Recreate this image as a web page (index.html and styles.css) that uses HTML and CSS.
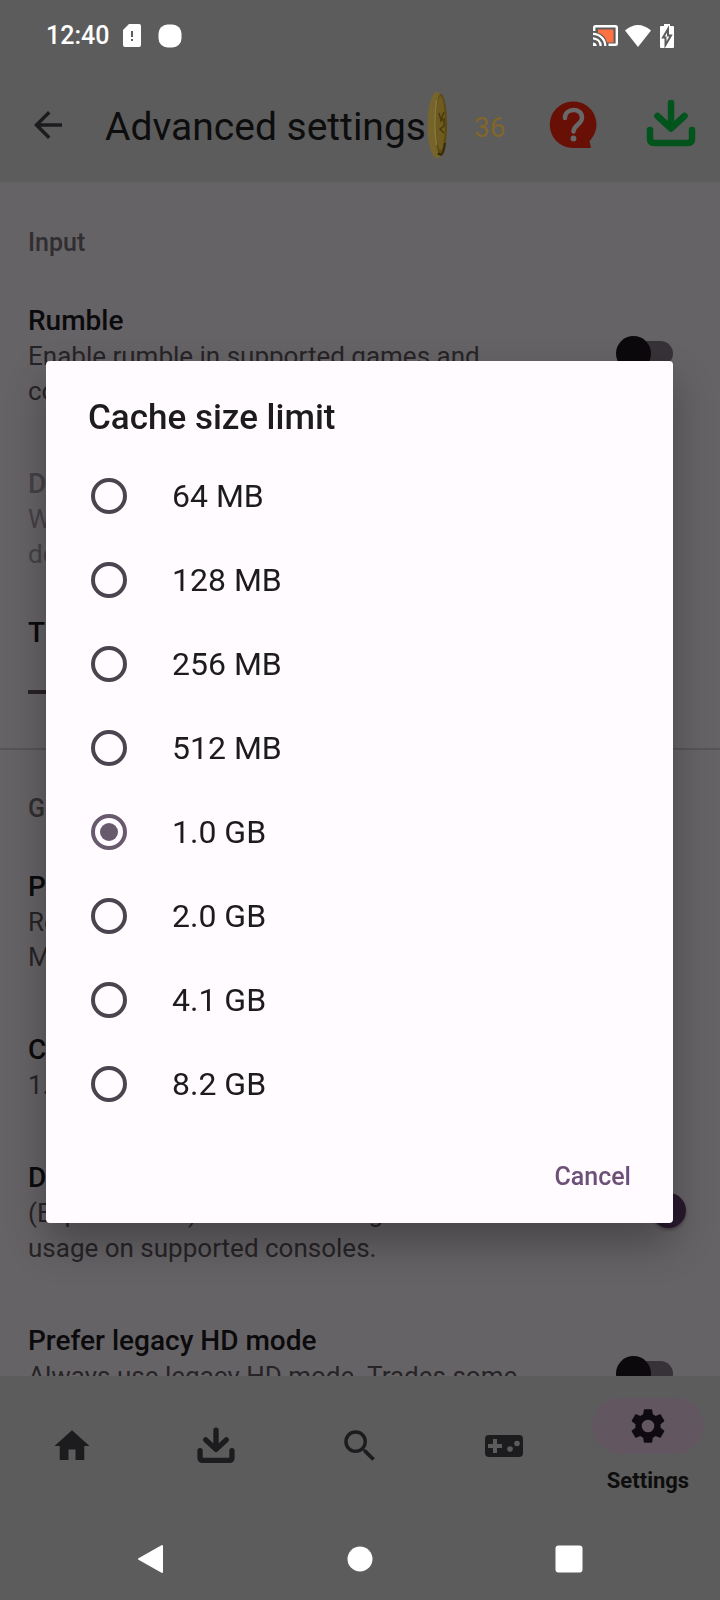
FILE: index.html
```html
<!DOCTYPE html>
<html lang="en">
<head>
    <meta charset="UTF-8">
    <meta name="viewport" content="width=device-width, initial-scale=1.0">
    <title>Advanced settings</title>
    <link rel="stylesheet" href="styles.css">
</head>
<body>
    <div class="screen">
        <!-- Status bar -->
        <div class="status-bar">
            <span class="time">12:40</span>
            <svg class="sim" width="20" height="24" viewBox="0 0 20 24"><path d="M7 0h10q2 0 2 2v19q0 2-2 2H3q-2 0-2-2V6z" fill="#fff"/><path d="M9 7h2v6H9zM9 15h2v2H9z" fill="#5c5c5c"/></svg>
            <svg class="dot" width="24" height="24" viewBox="0 0 24 24"><rect x="0.5" y="0.5" width="23" height="23" rx="9" fill="#fff"/></svg>
            <div class="status-icons">
                <svg width="25" height="22" viewBox="0 0 25 22">
                    <path d="M5 4.500h15.500v13H14C13 12 9 8.500 5 8z" fill="#ff7043"/>
                    <path d="M1.200 6V2.500Q1.200 1.200 2.500 1.200h20q1.300 0 1.300 1.300v16q0 1.300-1.300 1.300H15.500" fill="none" stroke="#fff" stroke-width="2.400"/>
                    <path d="M0 8.800A12.300 12.300 0 0 1 12.300 21M0 13.300A7.700 7.700 0 0 1 7.700 21" fill="none" stroke="#fff" stroke-width="2.200"/>
                    <path d="M0 17.500A3.800 3.800 0 0 1 3.800 21H0z" fill="#fff"/>
                </svg>
                <svg width="26" height="22" viewBox="0 0 26 22"><path d="M0 5.500Q13-5.500 26 5.500L13 22z" fill="#fff"/></svg>
                <svg class="battery" width="14" height="24" viewBox="0 0 14 24">
                    <path d="M4 0h6v2h3q1 0 1 1v20q0 1-1 1H1q-1 0-1-1V3q0-1 1-1h3z" fill="#fff"/>
                    <path d="M8 5L3 13.500h2.500V21L11 11.500H8z" fill="#fff" stroke="#5c5c5c" stroke-width="2"/>
                </svg>
            </div>
        </div>

        <!-- App bar -->
        <header class="app-bar">
            <button type="button" class="icon-btn" aria-label="Back">
                <svg width="42" height="42" viewBox="0 0 24 24"><path d="M20 11H7.830l5.590-5.590L12 4l-8 8 8 8 1.410-1.410L7.830 13H20z" fill="#1c1b1e"/></svg>
            </button>
            <h1>Advanced settings</h1>
            <svg class="coin" width="21" height="68" viewBox="0 0 21 68">
                <ellipse cx="10" cy="34" rx="9.500" ry="33.500" fill="#75652c"/>
                <ellipse cx="14" cy="34" rx="6" ry="31" fill="#5d4a10"/>
                <ellipse cx="13.500" cy="32" rx="4.500" ry="27" fill="#6d5b20"/>
                <path d="M9.500 9q-3 25 0 45" fill="none" stroke="#87773a" stroke-width="1.500"/>
                <path d="M12 22l2 7 3-8M13 30l4-2v7l-4 3 4 4" fill="none" stroke="#4a3a0c" stroke-width="1.500"/>
                <path d="M11 62q5 6 7-10" fill="none" stroke="#352a08" stroke-width="2"/>
            </svg>
            <span class="coins">36</span>
            <button type="button" class="icon-btn help" aria-label="Help">
                <svg width="48" height="48" viewBox="0 0 48 48">
                    <path d="M24 0.500a23 23 0 1 0 0 46.500h18l-1.500-7A23 23 0 0 0 24 0.500z" fill="#680f06"/>
                    <path d="M16 17C16 6.500 33 6.500 33 16.500c0 7-8.500 7.500-8.500 14" fill="none" stroke="#686868" stroke-width="4.500" stroke-linecap="round"/>
                    <circle cx="24.500" cy="37.500" r="2.900" fill="#686868"/>
                </svg>
            </button>
            <button type="button" class="icon-btn" aria-label="Download">
                <svg width="50" height="52" viewBox="0 0 50 52"><path d="M25 4v24M11.500 17L25 29.500 38.500 17M4 31v9q0 4 4 4h34q4 0 4-4v-9" fill="none" stroke="#00541c" stroke-width="6.500" stroke-linecap="round" stroke-linejoin="round"/></svg>
            </button>
        </header>

        <!-- Settings list -->
        <main class="settings">
            <h2>Input</h2>
            <div class="row">
                <label class="text" for="rumble"><strong>Rumble</strong><span>Enable rumble in supported games and controllers.</span></label>
                <input type="checkbox" class="switch" id="rumble">
            </div>
            <div class="row disabled">
                <div class="text"><strong>Device rumble</strong><span>When no gamepad is connected, use<br>device vibration.</span></div>
            </div>
            <div class="row slider-row">
                <label for="tilt">Tilt sensitivity</label>
                <input type="range" class="slider" id="tilt" value="50">
            </div>
            <h2 class="divided">General</h2>
            <div class="row">
                <div class="text"><strong>Performance</strong><span>Reduce the quality of the picture.<br>May help on slower devices.</span></div>
            </div>
            <div class="row">
                <div class="text"><strong>Cache size limit</strong><span>1.0 GB</span></div>
            </div>
            <div class="row">
                <label class="text" for="direct"><strong>Direct game loading</strong><span>(Experimental) Reduces storage<br>usage on supported consoles.</span></label>
                <input type="checkbox" class="switch" id="direct" checked>
            </div>
            <div class="row">
                <label class="text" for="legacy"><strong>Prefer legacy HD mode</strong><span>Always use legacy HD mode. Trades some quality for speed.</span></label>
                <input type="checkbox" class="switch" id="legacy">
            </div>
        </main>

        <!-- Bottom navigation -->
        <nav class="bottom-nav">
            <a href="#" aria-label="Home"><svg width="42" height="42" viewBox="0 0 24 24"><path d="M10 20v-6h4v6h5v-8h3L12 3 2 12h3v8z" fill="#1c1b1e"/></svg></a>
            <a href="#" aria-label="Downloads"><svg width="38" height="38" viewBox="0 0 50 50"><path d="M25 4v24M11.500 17L25 29.500 38.500 17M4 31v9q0 4 4 4h34q4 0 4-4v-9" fill="none" stroke="#1c1b1e" stroke-width="7" stroke-linecap="round" stroke-linejoin="round"/></svg></a>
            <a href="#" aria-label="Search"><svg width="42" height="42" viewBox="0 0 24 24"><path d="M15.500 14h-.79l-.28-.27A6.470 6.470 0 0 0 16 9.500 6.500 6.500 0 1 0 9.500 16c1.610 0 3.090-.59 4.230-1.570l.27.28v.79l5 4.990L20.490 19zm-6 0C7.010 14 5 11.990 5 9.500S7.010 5 9.500 5 14 7.010 14 9.500 11.990 14 9.500 14z" fill="#1c1b1e"/></svg></a>
            <a href="#" aria-label="Games"><svg width="40" height="22" viewBox="0 0 40 22"><rect x="1" width="38" height="22" rx="4" fill="#1c1b1e"/><path d="M4 11h14M11 4v14" stroke="#5c5c5c" stroke-width="4"/><circle cx="26" cy="14" r="2.800" fill="#5c5c5c"/><circle cx="33" cy="8.500" r="2.800" fill="#5c5c5c"/></svg></a>
            <a href="#" class="active">
                <span class="pill"><svg width="42" height="42" viewBox="0 0 24 24"><path d="M19.140 12.940c.04-.3.06-.61.06-.94 0-.32-.02-.64-.07-.94l2.030-1.580c.18-.14.23-.41.12-.61l-1.920-3.320c-.12-.22-.37-.29-.59-.22l-2.390.96c-.5-.38-1.030-.7-1.620-.94l-.36-2.540c-.04-.24-.24-.41-.48-.41h-3.840c-.24 0-.43.17-.47.41l-.36 2.540c-.59.24-1.130.57-1.620.94l-2.390-.96c-.22-.08-.47 0-.59.22L2.740 8.870c-.12.21-.08.47.12.61l2.030 1.580c-.05.3-.09.63-.09.94s.02.64.07.94l-2.030 1.580c-.18.14-.23.41-.12.61l1.920 3.320c.12.22.37.29.59.22l2.390-.96c.5.38 1.030.7 1.620.94l.36 2.540c.05.24.24.41.48.41h3.840c.24 0 .44-.17.47-.41l.36-2.540c.59-.24 1.130-.56 1.620-.94l2.390.96c.22.08.47 0 .59-.22l1.920-3.320c.12-.22.07-.47-.12-.61zM12 15.600A3.600 3.600 0 1 1 12 8.400a3.600 3.600 0 0 1 0 7.200z" fill="#0f0a12"/></svg></span>
                Settings
            </a>
        </nav>

        <!-- System navigation -->
        <div class="system-nav">
            <button type="button" aria-label="System back"><svg width="28" height="30" viewBox="0 0 28 30"><path d="M2 15L25 2v26z" fill="#fff" stroke="#fff" stroke-width="2" stroke-linejoin="round"/></svg></button>
            <button type="button" aria-label="System home"><svg width="28" height="28" viewBox="0 0 28 28"><circle cx="14" cy="14" r="12.500" fill="#fff"/></svg></button>
            <button type="button" aria-label="Recent apps"><svg width="28" height="28" viewBox="0 0 28 28"><rect x="0.500" y="0.500" width="27" height="27" rx="3" fill="#fff"/></svg></button>
        </div>
    </div>

    <!-- Cache size dialog -->
    <div class="overlay">
        <form class="dialog" role="dialog" aria-labelledby="dialogTitle">
            <h2 id="dialogTitle">Cache size limit</h2>
            <label class="option"><input type="radio" name="cache"> 64 MB</label>
            <label class="option"><input type="radio" name="cache"> 128 MB</label>
            <label class="option"><input type="radio" name="cache"> 256 MB</label>
            <label class="option"><input type="radio" name="cache"> 512 MB</label>
            <label class="option"><input type="radio" name="cache" checked> 1.0 GB</label>
            <label class="option"><input type="radio" name="cache"> 2.0 GB</label>
            <label class="option"><input type="radio" name="cache"> 4.1 GB</label>
            <label class="option"><input type="radio" name="cache"> 8.2 GB</label>
            <div class="actions">
                <button type="button" class="cancel-btn">Cancel</button>
            </div>
        </form>
    </div>
</body>
</html>
```
FILE: styles.css
```css
* {
    box-sizing: border-box;
}
body {
    margin: 0;
    font-family: Roboto, sans-serif;
    background-color: #5c5c5c;
    color: #1c1b1e;
}
h1, h2 {
    margin: 0;
}
button {
    padding: 0;
    border: none;
    background: none;
    font-family: inherit;
    cursor: pointer;
}
svg {
    display: block;
    flex-shrink: 0;
}
.screen {
    display: flex;
    flex-direction: column;
    height: 100vh;
}

/* Status bar */
.status-bar {
    display: flex;
    align-items: center;
    height: 70px;
    padding: 2px 46px 0;
    color: #fff;
}
.time {
    font-size: 25px;
    font-weight: 500;
    line-height: 30px;
}
.sim {
    margin-left: 13px;
}
.dot {
    margin-left: 16px;
}
.status-icons {
    display: flex;
    align-items: center;
    gap: 7px;
    margin-left: auto;
}
.battery {
    margin-left: 2px;
}

/* App bar */
.app-bar {
    display: flex;
    align-items: center;
    height: 112px;
    padding: 0 24px 2px 27px;
}
.app-bar h1 {
    margin-left: 36px;
    padding-top: 4px;
    font-size: 39px;
    font-weight: 400;
    line-height: 48px;
    color: #0d0d0e;
    white-space: nowrap;
}
.coin {
    margin-left: 1px;
}
.coins {
    margin-left: 26px;
    padding-top: 4px;
    font-size: 28px;
    color: #80662a;
}
.help {
    margin-left: auto;
    margin-right: 49px;
}

/* Settings list */
.settings {
    flex: 1;
    min-height: 0;
    overflow: hidden;
    background-color: #666366;
}
.settings h2 {
    height: 90px;
    padding: 45px 28px 0;
    font-size: 25px;
    font-weight: 500;
    line-height: 32px;
    color: #302e31;
}
.settings .divided {
    padding-top: 43px;
    border-top: 2px solid #575457;
}
.row {
    display: flex;
    align-items: center;
    justify-content: space-between;
    padding: 26px 34px 26px 28px;
}
.text {
    display: block;
    max-width: 500px;
    padding-top: 4px;
}
.text strong, .slider-row label {
    display: block;
    font-size: 28px;
    font-weight: 500;
    line-height: 37px;
    color: #0b0a0c;
}
.text span {
    display: block;
    font-size: 26px;
    line-height: 35px;
    color: #262427;
}
.disabled .text strong, .disabled .text span {
    color: #454246;
}
.slider-row {
    flex-direction: column;
    align-items: stretch;
    height: 150px;
    padding: 16px 120px 0 28px;
    justify-content: flex-start;
    gap: 39px;
}
.slider {
    appearance: none;
    width: 100%;
    height: 4px;
    margin: 0;
    background-color: #262227;
}
.slider::-webkit-slider-thumb {
    appearance: none;
    width: 35px;
    height: 35px;
    border-radius: 50%;
    background-color: #291a2e;
}
.switch {
    appearance: none;
    display: flex;
    align-items: center;
    flex-shrink: 0;
    width: 70px;
    height: 35px;
    margin: 0;
    padding: 0 13px;
    position: relative;
}
.switch::before {
    content: "";
    width: 100%;
    height: 25px;
    border-radius: 13px;
    background-color: #373237;
}
.switch::after {
    content: "";
    position: absolute;
    top: 0;
    left: 0;
    width: 35px;
    height: 35px;
    border-radius: 50%;
    background-color: #0b090c;
}
.switch:checked::after {
    left: auto;
    right: 0;
    background-color: #291a2e;
    box-shadow: 0 2px 3px rgba(0, 0, 0, 0.3);
}

/* Bottom navigation */
.bottom-nav {
    display: flex;
    height: 140px;
}
.bottom-nav a {
    flex: 1;
    display: flex;
    flex-direction: column;
    align-items: center;
    justify-content: center;
    font-size: 22px;
    font-weight: 700;
    line-height: 28px;
    color: #0d0d0e;
    text-decoration: none;
}
.bottom-nav .active {
    gap: 13px;
}
.pill {
    display: flex;
    align-items: center;
    justify-content: center;
    width: 112px;
    height: 56px;
    border-radius: 28px;
    background-color: #625660;
}

/* System navigation */
.system-nav {
    display: flex;
    height: 84px;
    padding: 2px 47px 0 46px;
}
.system-nav button {
    flex: 1;
    display: flex;
    align-items: center;
    justify-content: center;
}

/* Dialog */
.overlay {
    position: fixed;
    inset: 0;
    display: flex;
    align-items: center;
    padding: 0 47px 16px 46px;
}
.dialog {
    width: 100%;
    padding: 32px 42px 17px;
    border-radius: 4px;
    background-color: #fffbff;
    box-shadow: 0 20px 40px rgba(0, 0, 0, 0.3);
}
.dialog h2 {
    margin-bottom: 11px;
    font-size: 35px;
    font-weight: 500;
    line-height: 50px;
    color: #1c1b1e;
}
.option {
    display: flex;
    align-items: center;
    gap: 45px;
    height: 84px;
    padding-left: 3px;
    font-size: 32px;
}
.option input {
    appearance: none;
    display: flex;
    align-items: center;
    justify-content: center;
    width: 36px;
    height: 36px;
    margin: 0;
    border: 4px solid #49454e;
    border-radius: 50%;
}
.option input:checked {
    border-color: #685a6c;
}
.option input:checked::before {
    content: "";
    width: 18px;
    height: 18px;
    border-radius: 50%;
    background-color: #685a6c;
}
.actions {
    display: flex;
    justify-content: flex-end;
    padding-top: 20px;
}
.cancel-btn {
    height: 60px;
    font-size: 25px;
    font-weight: 500;
    color: #6d5078;
}
```
